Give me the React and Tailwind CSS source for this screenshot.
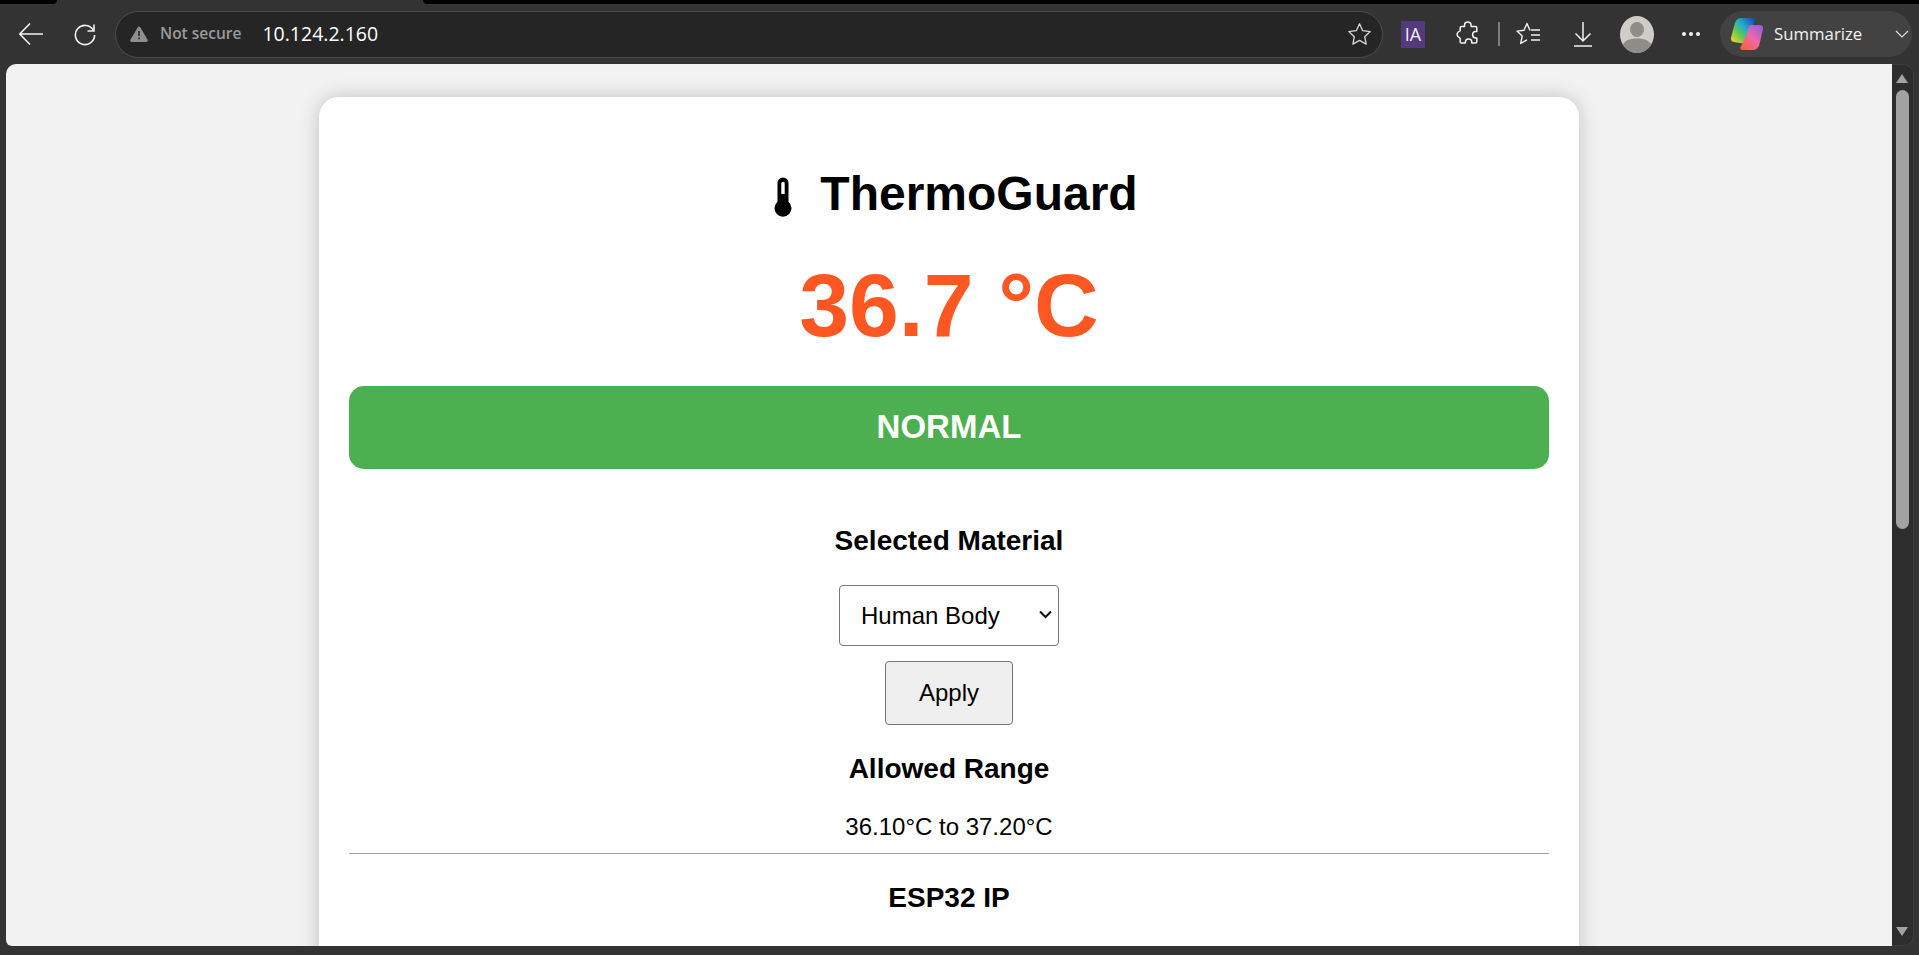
import React from "react";

function BackIcon() {
  return (
    <svg width="26" height="24" viewBox="0 0 26 24" fill="none" stroke="#f2f2f2" strokeWidth="1.6">
      <path d="M25 12H2M12 1.5 1.8 12 12 22.5" />
    </svg>
  );
}

function ReloadIcon() {
  return (
    <svg width="24" height="24" viewBox="0 0 24 24" fill="none" stroke="#f2f2f2" strokeWidth="1.6">
      <path d="M20.5 8.5A9.6 9.6 0 1 0 21.6 13" />
      <path d="M21 2.5V9h-6.5" />
    </svg>
  );
}

function WarningIcon() {
  return (
    <svg width="18" height="16" viewBox="0 0 18 16">
      <path d="M9 .5a1.4 1.4 0 0 1 1.2.7l7.4 12.6a1.4 1.4 0 0 1-1.2 2.1H1.6a1.4 1.4 0 0 1-1.2-2.1L7.8 1.2A1.4 1.4 0 0 1 9 .5Z" fill="#8f8f8f" />
      <path d="M8.2 5h1.6v5H8.2zM8.2 11.5h1.6v1.7H8.2z" fill="#262626" />
    </svg>
  );
}

function StarIcon() {
  return (
    <svg width="25" height="24" viewBox="0 0 25 24" fill="none" stroke="#d6d6d6" strokeWidth="1.3" strokeLinejoin="round">
      <path d="m12.5 1.8 3.2 6.9 7.5.9-5.5 5.1 1.5 7.4-6.7-3.7-6.6 3.7 1.4-7.4-5.5-5.1 7.5-.9Z" />
    </svg>
  );
}

function PuzzleIcon() {
  return (
    <svg width="24" height="26" viewBox="0 0 24 26" fill="none" stroke="#f2f2f2" strokeWidth="1.5" strokeLinejoin="round">
      <path d="M8.500 5.500V4.200a3.300 3.300 0 0 1 6.600 0v1.300h4.400c.8 0 1.300.5 1.300 1.300v3.700h-1a3.200 3.200 0 0 0 0 6.400h1v3.800c0 .8-.5 1.300-1.300 1.300h-3.700v-.9a3.200 3.200 0 0 0-6.400 0v.9H5.500c-.8 0-1.300-.5-1.300-1.300v-3.200L3 16.300a3.100 3.100 0 0 1-.7-5.300l1.900-1.300V6.800c0-.8.500-1.300 1.300-1.300Z" />
    </svg>
  );
}

function FavoritesIcon() {
  return (
    <svg width="26" height="26" viewBox="0 0 26 26" fill="none" stroke="#f2f2f2" strokeWidth="1.4" strokeLinejoin="round">
      <path d="M14 9.500 11 2.500 8 9.300l-7 .8 5.200 4.900-1.500 7.500 6.300-3.700" />
      <path d="M15 9h9M15 14h9M15 19h9" />
    </svg>
  );
}

function DownloadIcon() {
  return (
    <svg width="20" height="26" viewBox="0 0 20 26" fill="none" stroke="#f2f2f2" strokeWidth="1.5">
      <path d="M10 1v19M2.500 12.500 10 20l7.500-7.500M1 25h18" />
    </svg>
  );
}

function AvatarIcon() {
  return (
    <svg width="34" height="37" viewBox="0 0 34 37">
      <ellipse cx="17" cy="18.500" rx="17" ry="18.500" fill="#cfcdc8" />
      <ellipse cx="17" cy="13.500" rx="7" ry="7.500" fill="#8f8d89" />
      <path d="M2.800 28.500C5.500 24 10.500 22.500 17 22.500s11.500 1.500 14.200 6A17 18.500 0 0 1 17 37 17 18.500 0 0 1 2.800 28.500Z" fill="#8f8d89" />
    </svg>
  );
}

function CopilotIcon() {
  return (
    <svg width="34" height="34" viewBox="0 0 34 34">
      <defs>
        <linearGradient id="copA" x1="0" y1="0.9" x2="0.9" y2="0">
          <stop offset="0" stopColor="#f4d32f" />
          <stop offset="0.35" stopColor="#62c94f" />
          <stop offset="0.6" stopColor="#22b0c8" />
          <stop offset="1" stopColor="#1450c4" />
        </linearGradient>
        <linearGradient id="copB" x1="0.1" y1="1" x2="0.9" y2="0">
          <stop offset="0" stopColor="#f5642e" />
          <stop offset="0.5" stopColor="#f267a8" />
          <stop offset="1" stopColor="#8e5fe0" />
        </linearGradient>
      </defs>
      <path d="M11 1h11.500c2 0 2.800 1.500 2 3.500L17.500 17l-3.500 7.500c-.7 1.500-1.600 2-3 1.800l-7-1.300C1.500 24.500.5 23 1 20.500L5 6C5.900 3 8 1 11 1Z" fill="url(#copA)" />
      <path d="M21 8h8.500c2.500 0 4 1.500 3.500 4l-3.500 15c-.8 3.800-3 6-6.500 6H12.500c-2 0-2.700-1.500-2-3L17 17l1.500-6.500C18.800 9 19.800 8 21 8Z" fill="url(#copB)" />
    </svg>
  );
}

function ThermometerIcon() {
  return (
    <svg width="18" height="40" viewBox="0 0 18 40">
      <path fillRule="evenodd" d="M3.500 6a5.500 5.500 0 0 1 11 0v18.700a8.500 8.500 0 1 1-11 0ZM7.300 6.500a1.700 1.700 0 0 1 3.400 0v10.500H7.300Z" fill="#000" />
    </svg>
  );
}

function BrowserToolbar() {
  return (
    <div className="shrink-0 bg-[#333333]">
      <div className="flex h-[4px]">
        <div className="w-[57px] rounded-br-[4px] bg-black" />
        <div className="w-[366px]" />
        <div className="flex-1 rounded-bl-[4px] bg-black" />
      </div>
      <div className="flex h-[60px] items-center">
        <div className="ml-[18px] flex h-[24px] w-[26px] items-center justify-center"><BackIcon /></div>
        <div className="ml-[29px] flex h-[24px] w-[24px] items-center justify-center"><ReloadIcon /></div>
        <div className="ml-[18px] flex h-[47px] w-[1268px] items-center rounded-full border border-[#4b4b4b] bg-[#252525] pl-[14px] pr-[10px]">
          <WarningIcon />
          <span className="ml-[12px] text-[15.500px] font-semibold text-[#9a9a9a] [font-family:'Open_Sans',sans-serif]">Not secure</span>
          <span className="ml-[21px] text-[19.500px] text-white [font-family:'Open_Sans',sans-serif]">10.124.2.160</span>
          <div className="ml-auto"><StarIcon /></div>
        </div>
        <div className="ml-[18px] flex h-[27px] w-[24px] items-center justify-center bg-[#54397f] text-[18px] text-[#f0f0f0] [font-family:'Open_Sans',sans-serif]">IA</div>
        <div className="ml-[31px]"><PuzzleIcon /></div>
        <div className="ml-[18px] h-[24px] w-[2px] bg-[#7d7d7d]" />
        <div className="ml-[16px]"><FavoritesIcon /></div>
        <div className="ml-[31px]"><DownloadIcon /></div>
        <div className="ml-[27px]"><AvatarIcon /></div>
        <div className="ml-[28px] flex w-[18px] justify-between">
          <span className="size-[4px] rounded-full bg-[#f2f2f2]" />
          <span className="size-[4px] rounded-full bg-[#f2f2f2]" />
          <span className="size-[4px] rounded-full bg-[#f2f2f2]" />
        </div>
        <div className="ml-[20px] flex h-[46px] w-[192px] items-center rounded-full bg-[#424242] pl-[10px]">
          <CopilotIcon />
          <span className="ml-[10px] text-[16.800px] text-[#f2f2f2] [font-family:'Open_Sans',sans-serif]">Summarize</span>
          <svg className="ml-[32px]" width="16" height="10" viewBox="0 0 16 10" fill="none" stroke="#e0e0e0" strokeWidth="1.200">
            <path d="m2 2 6 6 6-6" />
          </svg>
        </div>
      </div>
    </div>
  );
}

function ScrollRail() {
  return (
    <div className="flex w-[22px] shrink-0 flex-col items-center rounded-r-[10px] border-r border-t border-b border-[#3d3d3d] bg-[#2d2d2d] pr-[1px] pt-[9px]">
      <div className="h-0 w-0 border-x-[6px] border-b-[9px] border-x-transparent border-b-[#a3a3a3]" />
      <div className="mt-[7px] h-[439px] w-[13px] rounded-full bg-[#a3a3a3]" />
      <div className="mt-auto mb-[9px] h-0 w-0 border-x-[6px] border-t-[9px] border-x-transparent border-t-[#a3a3a3]" />
    </div>
  );
}

function StatusCard() {
  return (
    <div className="mx-auto mt-[33px] w-[1260px] rounded-[20px] bg-white px-[30px] pb-[60px] pt-[30px] text-center text-black shadow-[0_0_20px_rgba(0,0,0,0.2)] [font-family:'Liberation_Sans',Arial,sans-serif]">
      <h1 className="mt-[39px] flex items-center justify-center text-[48px] font-bold leading-[55px]">
        <span className="flex w-[60px] pl-[14px] pt-[6px]"><ThermometerIcon /></span>
        ThermoGuard
      </h1>
      <div className="mt-[34px] text-[89.500px] font-bold leading-[100px] text-[#ff5722]">36.7 °C</div>
      <div className="mt-[31px] flex h-[83px] items-center justify-center rounded-[15px] bg-[#4caf50] pb-[2px] text-[33px] font-bold text-white">NORMAL</div>
      <h3 className="mt-[56px] text-[28px] font-bold leading-[32px]">Selected Material</h3>
      <div className="relative mx-auto mt-[28px] h-[61px] w-[220px]">
        <select defaultValue="Human Body" className="block h-full w-full appearance-none rounded-[4px] border border-[#767676] bg-white pl-[21px] text-[24px] text-black">
          <option>Human Body</option>
        </select>
        <svg className="pointer-events-none absolute right-[7px] top-[25px]" width="13" height="9" viewBox="0 0 13 9" fill="none" stroke="#111" strokeWidth="2">
          <path d="m1 1.500 5.500 5.500L12 1.500" />
        </svg>
      </div>
      <button className="mx-auto mt-[15px] block h-[64px] w-[128px] rounded-[4px] border border-[#767676] bg-[#efefef] text-[24px]">Apply</button>
      <h3 className="mt-[28px] text-[28px] font-bold leading-[32px]">Allowed Range</h3>
      <p className="mt-[28px] text-[24px] leading-[28px]">36.10°C to 37.20°C</p>
      <hr className="mt-[12px] border-t border-[#a0a0a0]" />
      <h3 className="mt-[28px] text-[28px] font-bold leading-[32px]">ESP32 IP</h3>
    </div>
  );
}

export default function App() {
  return (
    <div className="flex h-screen flex-col overflow-hidden bg-[#333333]">
      <BrowserToolbar />
      <div className="flex h-[882px] shrink-0 pl-[6px] pr-[5px]">
        <div className="flex-1 overflow-hidden rounded-tl-[10px] rounded-bl-[6px] bg-[#f2f2f2]">
          <StatusCard />
        </div>
        <ScrollRail />
      </div>
    </div>
  );
}
